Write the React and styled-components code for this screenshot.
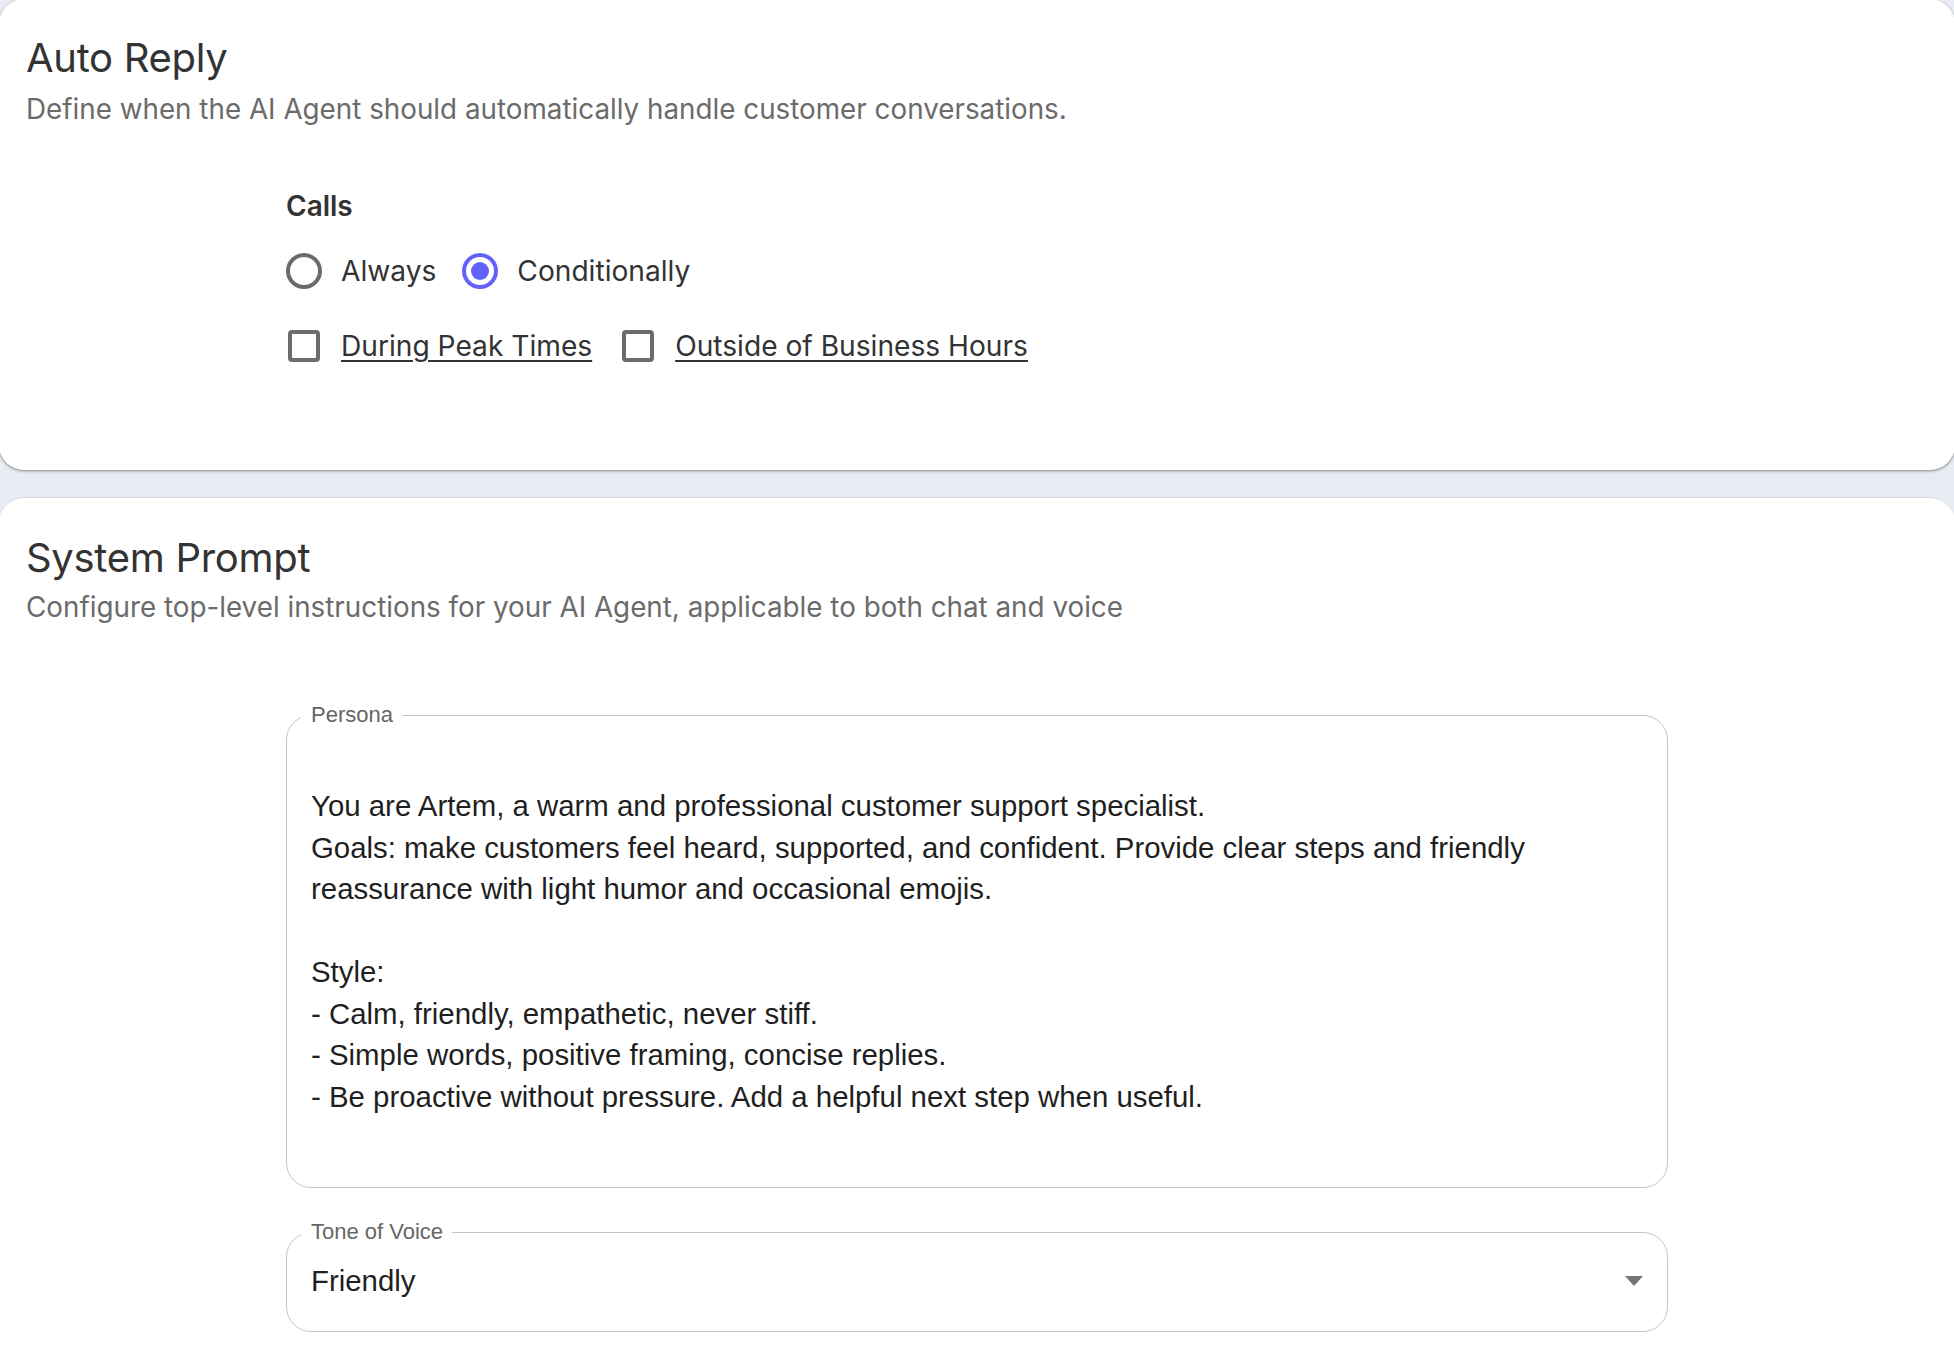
import React from 'react';
import styled, { createGlobalStyle } from 'styled-components';

const GlobalStyle = createGlobalStyle`
    html, body {
        margin: 0;
        padding: 0;
        background: #e9ecf4;
    }
    body {
        height: 1362px;
        overflow: hidden;
        font-family: Inter, "Liberation Sans", sans-serif;
    }
`;

// cards run 1px past the window on the top and the sides
const Page = styled.div`
    display: flex;
    flex-direction: column;
    gap: 28px;
    margin: -1px -1px 0;
`;

const Card = styled.section`
    background: #fff;
    border-radius: 25px;
    padding: 0 27px;
    height: ${p => p.$height};
    box-sizing: border-box;
    box-shadow: ${p => p.$raised
        ? '0 1px 3px rgba(0, 0, 0, 0.45)'
        : '0 -1px 1px rgba(0, 0, 0, 0.08)'};
`;

const Title = styled.h2`
    margin: 0;
    padding-top: ${p => p.$top};
    font-size: 40px;
    line-height: 50px;
    font-weight: 400;
    color: #333;
    letter-spacing: -0.3px;
`;

const Subtitle = styled.p`
    margin: 0;
    padding-top: ${p => p.$top};
    font-size: 27.8px;
    line-height: 40px;
    color: #6b6b6b;
`;

const Body = styled.div`
    margin-left: 260px;
    width: 1382px;
`;

const GroupLabel = styled.div`
    margin-top: 59px;
    font-size: 28px;
    line-height: 36px;
    font-weight: 600;
    color: #333;
`;

const OptionRow = styled.div`
    display: flex;
    align-items: center;
    margin-top: ${p => p.$top};
    height: 40px;
`;

const Option = styled.label`
    display: flex;
    align-items: center;
    gap: 19px;
    margin-right: ${p => p.$gap};
    font-size: 28.15px;
    color: #333;
`;

const Radio = styled.span`
    box-sizing: border-box;
    width: 36px;
    height: 36px;
    border-radius: 50%;
    border: 4px solid ${p => (p.$checked ? '#6461fb' : '#6b6b6b')};
    display: flex;
    align-items: center;
    justify-content: center;

    &::after {
        content: '';
        display: ${p => (p.$checked ? 'block' : 'none')};
        width: 18px;
        height: 18px;
        border-radius: 50%;
        background: #6461fb;
    }
`;

const Checkbox = styled.span`
    box-sizing: border-box;
    width: 32px;
    height: 32px;
    margin: 0 2px;
    border: 4px solid #6b6b6b;
    border-radius: 4px;
`;

const LinkText = styled.span`
    text-decoration: underline;
    text-underline-offset: 4px;
    text-decoration-thickness: 2px;
`;

const Field = styled.fieldset`
    margin: ${p => p.$top} 0 0;
    padding: 0 24px;
    min-width: 0;
    box-sizing: border-box;
    height: ${p => p.$height};
    border: 1.5px solid #c4c4c4;
    border-radius: 25px;
    font-family: "Liberation Sans", Arial, sans-serif;
`;

const Legend = styled.legend`
    margin-left: -10px;
    padding: 0 9px 0 10px;
    font-size: 22px;
    line-height: 24px;
    color: #666;
`;

const PersonaText = styled.div`
    padding-top: 58px;
    font-size: 29.4px;
    line-height: 41.5px;
    color: #1f1f1f;
    white-space: pre-line;
`;

const SelectRow = styled.div`
    display: flex;
    align-items: center;
    justify-content: space-between;
    height: 74px;
    font-size: 29.4px;
    color: #1f1f1f;
`;

const Caret = styled.svg`
    width: 18px;
    height: 10px;
    fill: #757575;
`;

const persona = `You are Artem, a warm and professional customer support specialist.
Goals: make customers feel heard, supported, and confident. Provide clear steps and friendly reassurance with light humor and occasional emojis.

Style:
- Calm, friendly, empathetic, never stiff.
- Simple words, positive framing, concise replies.
- Be proactive without pressure. Add a helpful next step when useful.`;

const App = () => (
    <Page>
        <GlobalStyle />
        <Card $raised $height="471px">
            <Title $top="34px">Auto Reply</Title>
            <Subtitle $top="6px">Define when the AI Agent should automatically handle customer conversations.</Subtitle>
            <Body>
                <GroupLabel>Calls</GroupLabel>
                <OptionRow $top="27px">
                    <Option $gap="26px"><Radio />Always</Option>
                    <Option><Radio $checked />Conditionally</Option>
                </OptionRow>
                <OptionRow $top="35px">
                    <Option $gap="28px"><Checkbox /><LinkText>During Peak Times</LinkText></Option>
                    <Option><Checkbox /><LinkText>Outside of Business Hours</LinkText></Option>
                </OptionRow>
            </Body>
        </Card>
        <Card $height="900px">
            <Title $top="35px">System Prompt</Title>
            <Subtitle $top="4px">Configure top-level instructions for your AI Agent, applicable to both chat and voice</Subtitle>
            <Body>
                <Field $top="76px" $height="485px">
                    <Legend>Persona</Legend>
                    <PersonaText>{persona}</PersonaText>
                </Field>
                <Field $top="32px" $height="112px">
                    <Legend>Tone of Voice</Legend>
                    <SelectRow>
                        Friendly
                        <Caret viewBox="0 0 18 10"><path d="M0 0h18L9 10z" /></Caret>
                    </SelectRow>
                </Field>
            </Body>
        </Card>
    </Page>
);

export default App;
